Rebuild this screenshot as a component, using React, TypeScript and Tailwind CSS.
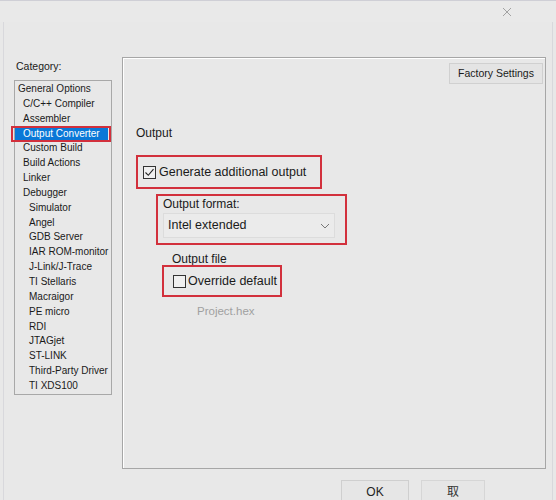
import React from "react";

const categories: { label: string; level: number; selected?: boolean }[] = [
  { label: "General Options", level: 0 },
  { label: "C/C++ Compiler", level: 1 },
  { label: "Assembler", level: 1 },
  { label: "Output Converter", level: 1, selected: true },
  { label: "Custom Build", level: 1 },
  { label: "Build Actions", level: 1 },
  { label: "Linker", level: 1 },
  { label: "Debugger", level: 1 },
  { label: "Simulator", level: 2 },
  { label: "Angel", level: 2 },
  { label: "GDB Server", level: 2 },
  { label: "IAR ROM-monitor", level: 2 },
  { label: "J-Link/J-Trace", level: 2 },
  { label: "TI Stellaris", level: 2 },
  { label: "Macraigor", level: 2 },
  { label: "PE micro", level: 2 },
  { label: "RDI", level: 2 },
  { label: "JTAGjet", level: 2 },
  { label: "ST-LINK", level: 2 },
  { label: "Third-Party Driver", level: 2 },
  { label: "TI XDS100", level: 2 },
];

const indent = ["pl-[3px]", "pl-[8px]", "pl-[14px]"];

const CheckBox = ({ checked }: { checked?: boolean }) => (
  <span className="w-[13px] h-[13px] border border-[#333] bg-[#f0f0f0] flex items-center justify-center shrink-0">
    {checked && (
      <svg width="11" height="11" viewBox="0 0 11 11">
        <path d="M1.5 5.5 L4.3 8.3 L9.5 2.2" fill="none" stroke="#222" strokeWidth="1.1" />
      </svg>
    )}
  </span>
);

const CategoryList = () => (
  <div className="flex flex-col w-[98px] shrink-0">
    <div className="text-[10.5px] leading-[14px] mt-[2px] pl-[2px] text-[#1a1a1a]">Category:</div>
    <div className="mt-[7px] h-[315px] border border-[#a8a8a8] pt-[1px]">
      {categories.map((c) => (
        <div key={c.label} className={"relative h-[14.85px] text-[10px] leading-[14.85px] whitespace-nowrap " + indent[c.level]}>
          {c.selected ? (
            <>
              <div className="absolute left-0 right-[3px] top-0 bottom-0 bg-[#0a78d7]" />
              <div className="absolute -left-[4px] right-0 -top-[1px] -bottom-[1px] border-2 border-[#d2303c]" />
              <span className="relative text-white">{c.label}</span>
            </>
          ) : (
            <span className="text-[#1a1a1a]">{c.label}</span>
          )}
        </div>
      ))}
    </div>
  </div>
);

const OutputPanel = () => (
  <div className="w-[424px] h-[412px] border border-[#a6a6a6] shadow-[inset_1px_1px_0_#ffffff] flex flex-col text-[#1a1a1a] whitespace-nowrap">
    <div className="self-end mr-[2px] mt-[5px] w-[94px] h-[21px] border border-[#d0d0d0] bg-[#e4e4e4] text-[10.5px] flex items-center justify-center">
      Factory Settings
    </div>

    <div className="ml-[13px] mt-[41px] text-[12px] leading-[16px]">Output</div>

    <div className="ml-[13px] mt-[14px] w-[186px] h-[34px] border-2 border-[#d2303c] flex items-center pl-[5px] gap-[3px]">
      <CheckBox checked />
      <span className="text-[12.5px]">Generate additional output</span>
    </div>

    <div className="ml-[33px] mt-[5px] w-[191px] h-[51px] border-2 border-[#d2303c] flex flex-col pl-[5px]">
      <span className="text-[12px] leading-[16px]">Output format:</span>
      <div className="mt-[1px] w-[172px] h-[25px] bg-[#ebebeb] border border-[#dcdcdc] flex items-center justify-between pl-[4px] pr-[4px]">
        <span className="text-[12.5px]">Intel extended</span>
        <svg width="10" height="6" viewBox="0 0 10 6">
          <path d="M1 1 L5 5 L9 1" fill="none" stroke="#777" strokeWidth="1" />
        </svg>
      </div>
    </div>

    <div className="ml-[49px] mt-[7px] text-[12px] leading-[14px]">Output file</div>

    <div className="ml-[39px] mt-[-1px] w-[120px] h-[32px] border-2 border-[#d2303c] flex items-center pl-[9px] gap-[2px]">
      <CheckBox />
      <span className="text-[12.5px]">Override default</span>
    </div>

    <div className="ml-[74px] mt-[6px] text-[11.5px] leading-[16px] text-[#a0a0a0]">Project.hex</div>
  </div>
);

export default function App() {
  return (
    <div
      className="relative w-[556px] h-[500px] overflow-hidden bg-[#e8e8e8]"
      style={{ fontFamily: '"Liberation Sans", "Noto Sans CJK SC", sans-serif' }}
    >
      {/* title strip */}
      <div className="h-[22px] border-t border-[#cfcfd6] bg-[#e9e9e9] flex justify-end items-center pr-[44px]">
        <svg width="10" height="10" viewBox="0 0 10 10">
          <path d="M1 1 L9 9 M9 1 L1 9" stroke="#9a9a9a" strokeWidth="0.9" />
        </svg>
      </div>

      <div className="h-[478px] ml-[3px] mr-[3px] border-l border-r border-[#d8d8dc] flex flex-col">
        <div className="flex gap-[10px] pl-[10px] mt-[35px]">
          <CategoryList />
          <OutputPanel />
        </div>

        <div className="flex gap-[12px] ml-[337px] mt-[11px]">
          <div className="w-[68px] h-[24px] border border-[#cfcfcf] bg-[#e6e6e6] flex items-center justify-center text-[12px] text-[#222]">
            OK
          </div>
          <div className="w-[64px] h-[24px] border border-[#d6d6d6] bg-[#e6e6e6] flex items-center justify-center text-[12px] text-[#333]">
            取
          </div>
        </div>
      </div>
    </div>
  );
}
